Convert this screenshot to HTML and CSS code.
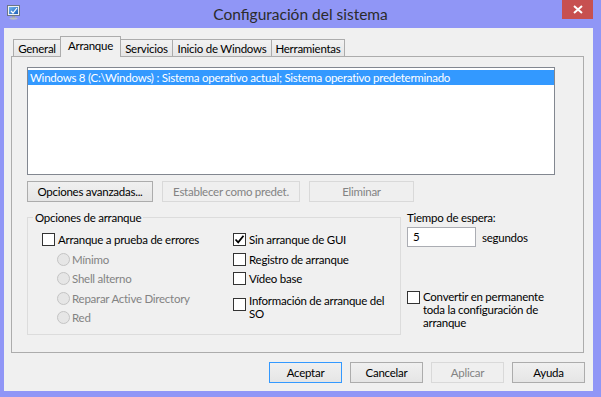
FILE: index.html
```html
<!DOCTYPE html>
<html lang="es">
<head>
<meta charset="utf-8">
<title>Configuración del sistema</title>
<link rel="stylesheet" href="styles.css">
</head>
<body>
<div class="window">
  <div class="titlebar">
    <div class="tb-left">
      <svg class="app-icon" viewBox="0 0 16 16" width="16" height="16">
        <defs>
          <linearGradient id="scr" x1="0" y1="0" x2="1" y2="1">
            <stop offset="0" stop-color="#6fb6f2"/>
            <stop offset="1" stop-color="#1f5fb8"/>
          </linearGradient>
        </defs>
        <rect x="1.5" y="1.5" width="12" height="10" fill="#eef0f4" stroke="#6c7686"/>
        <rect x="3" y="3" width="9" height="7" fill="url(#scr)"/>
        <path d="M5 7 L7 9 L11 4" fill="none" stroke="#ffffff" stroke-width="1.2"/>
        <rect x="6" y="12" width="3" height="2" fill="#9aa0a8"/>
        <ellipse cx="7.5" cy="14.6" rx="4" ry="1.1" fill="#b9bec5"/>
      </svg>
    </div>
    <div class="title">Configuración del sistema</div>
    <div class="tb-right">
      <div class="close">
        <svg viewBox="0 0 10 9" width="10" height="9">
          <path d="M1 1 L9 8 M9 1 L1 8" stroke="#ffffff" stroke-width="2" fill="none"/>
        </svg>
      </div>
    </div>
  </div>

  <div class="client">
    <div class="tabs">
      <div class="tab tab-general">General</div>
      <div class="tab tab-arranque active">Arranque</div>
      <div class="tab tab-servicios">Servicios</div>
      <div class="tab tab-inicio">Inicio de Windows</div>
      <div class="tab tab-herr">Herramientas</div>
    </div>

    <div class="panel">
      <div class="listbox">
        <div class="list-item selected">Windows 8 (C:\Windows) : Sistema operativo actual; Sistema operativo predeterminado</div>
      </div>

      <div class="btn-row">
        <div class="btn btn-adv">Opciones avanzadas...</div>
        <div class="btn btn-est disabled">Establecer como predet.</div>
        <div class="btn btn-elim disabled">Eliminar</div>
      </div>

      <div class="options">
        <div class="groupbox">
          <div class="legend">Opciones de arranque</div>
          <div class="gcols">
            <div class="gcol gcol-left">
              <div class="row"><span class="cb"></span>Arranque a prueba de errores</div>
              <div class="row radio-row"><span class="rb"></span>Mínimo</div>
              <div class="row radio-row"><span class="rb"></span>Shell alterno</div>
              <div class="row radio-row"><span class="rb"></span>Reparar Active Directory</div>
              <div class="row radio-row"><span class="rb"></span>Red</div>
            </div>
            <div class="gcol gcol-right">
              <div class="row"><span class="cb checked"><svg viewBox="0 0 11 11" width="11" height="11"><path d="M1.5 5.5 L4.2 8.3 L9.5 1.8" fill="none" stroke="#000" stroke-width="1.8"/></svg></span>Sin arranque de GUI</div>
              <div class="row"><span class="cb"></span>Registro de arranque</div>
              <div class="row"><span class="cb"></span>Vídeo base</div>
              <div class="multi"><span class="cb"></span><span>Información de arranque del<br>SO</span></div>
            </div>
          </div>
        </div>

        <div class="side">
          <div class="side-label">Tiempo de espera:</div>
          <div class="timeout-row">
            <div class="textbox">5</div>
            <span>segundos</span>
          </div>
          <div class="permanent"><span class="cb"></span><span>Convertir en permanente<br>toda la configuración de<br>arranque</span></div>
        </div>
      </div>
    </div>

    <div class="footer">
      <div class="btn fbtn default">Aceptar</div>
      <div class="btn fbtn">Cancelar</div>
      <div class="btn fbtn disabled">Aplicar</div>
      <div class="btn fbtn">Ayuda</div>
    </div>
  </div>
</div>
</body>
</html>
```

FILE: styles.css
```css
* { box-sizing: border-box; }
html, body { margin: 0; padding: 0; }
body {
  width: 601px;
  height: 397px;
  overflow: hidden;
  background: #9096f6;
  font-family: Lato, "Noto Sans", "Liberation Sans", sans-serif;
  font-size: 11.5px;
  letter-spacing: -0.25px;
  color: #000;
}
.window { display: flex; flex-direction: column; height: 397px; }

.titlebar {
  height: 28px;
  display: grid;
  grid-template-columns: 1fr auto 1fr;
  align-items: start;
  flex: none;
}
.tb-left { padding: 4px 0 0 6px; }
.app-icon { display: block; }
.title {
  font-size: 15.5px;
  letter-spacing: 0;
  line-height: 18px;
  padding-top: 5px;
  color: #2b2b2b;
  white-space: nowrap;
}
.tb-right { display: flex; justify-content: flex-end; padding-right: 8px; }
.close {
  width: 31px;
  height: 19px;
  background: #c75050;
  display: flex;
  align-items: center;
  justify-content: center;
}
.close svg { display: block; }

.client {
  flex: 1;
  margin: 0 8px 6px 4px;
  background: #f0f0f0;
  display: flex;
  flex-direction: column;
  padding: 8px 9px 8px 7px;
}

.tabs {
  display: flex;
  align-items: flex-end;
  height: 20px;
  padding-left: 2px;
  flex: none;
}
.tab {
  height: 17px;
  line-height: 17px;
  border: 1px solid #acacac;
  border-bottom: none;
  background: linear-gradient(#f2f2f2, #e6e6e6);
  text-align: center;
  margin-left: -1px;
  white-space: nowrap;
}
.tab:first-child { margin-left: 0; }
.tab.active {
  height: 21px;
  margin-bottom: -1px;
  background: #f0f0f0;
  position: relative;
  z-index: 1;
  line-height: 18px;
}
.tab-general { width: 48px; }
.tab-arranque { width: 61px; }
.tab-servicios { width: 53px; }
.tab-inicio { width: 100px; }
.tab-herr { width: 74px; }

.panel {
  flex: 1;
  border: 1px solid #acacac;
  padding: 10px 0 0 15px;
  display: flex;
  flex-direction: column;
  align-items: flex-start;
}

.listbox {
  width: 528px;
  height: 108px;
  background: #fff;
  border: 1px solid #828790;
  padding-top: 2px;
}
.list-item {
  height: 15px;
  line-height: 15px;
  padding-left: 2px;
  white-space: nowrap;
}
.list-item.selected { background: #3399ff; color: #fff; }

.btn-row { display: flex; gap: 9px; margin-top: 6px; }
.btn {
  height: 21px;
  line-height: 19px;
  border: 1px solid #acacac;
  background: linear-gradient(#f0f0f0, #e5e5e5);
  text-align: center;
  white-space: nowrap;
}
.btn.disabled {
  border-color: #d9d9d9;
  background: #efefef;
  color: #838383;
}
.btn.default { border-color: #3399ff; }
.btn-adv { width: 126px; }
.btn-est { width: 138px; }
.btn-elim { width: 105px; }

.options { display: flex; margin-top: 8px; }
.groupbox {
  width: 374px;
  height: 118px;
  margin-top: 7px;
  border: 1px solid #dcdcdc;
  padding-left: 14px;
}
.legend {
  display: table;
  margin: -8px 0 0 -9px;
  padding: 0 2px;
  background: #f0f0f0;
  line-height: 15px;
}
.gcols { display: flex; margin-top: 5px; }
.gcol-left { width: 191px; }
.row {
  display: flex;
  align-items: center;
  height: 19.5px;
  white-space: nowrap;
}
.cb {
  width: 13px;
  height: 13px;
  border: 1px solid #333;
  background: #fff;
  margin-right: 3px;
  flex: none;
  display: flex;
  align-items: center;
  justify-content: center;
}
.cb svg { display: block; }
.radio-row { padding-left: 15px; color: #838383; }
.rb {
  width: 13px;
  height: 13px;
  border-radius: 50%;
  border: 1px solid #c4c4c4;
  background: #e6e6e6;
  margin-right: 2px;
  flex: none;
}
.multi {
  display: flex;
  align-items: flex-start;
  margin-top: 5px;
  line-height: 13px;
}
.multi .cb { margin-top: 4.5px; }

.side { margin-left: 6px; display: flex; flex-direction: column; }
.side-label { line-height: 16px; }
.timeout-row { display: flex; align-items: center; gap: 6px; margin-top: 1px; }
.textbox {
  width: 69px;
  height: 20px;
  border: 1px solid #abadb3;
  background: #fff;
  padding-left: 5px;
  line-height: 18px;
}
.permanent {
  display: flex;
  align-items: flex-start;
  margin-top: 43px;
  line-height: 13px;
}
.permanent .cb { margin-top: 1px; }

.footer {
  display: flex;
  justify-content: flex-end;
  gap: 8px;
  margin-top: 9px;
  margin-right: -1px;
  flex: none;
}
.fbtn { width: 73px; }
```
